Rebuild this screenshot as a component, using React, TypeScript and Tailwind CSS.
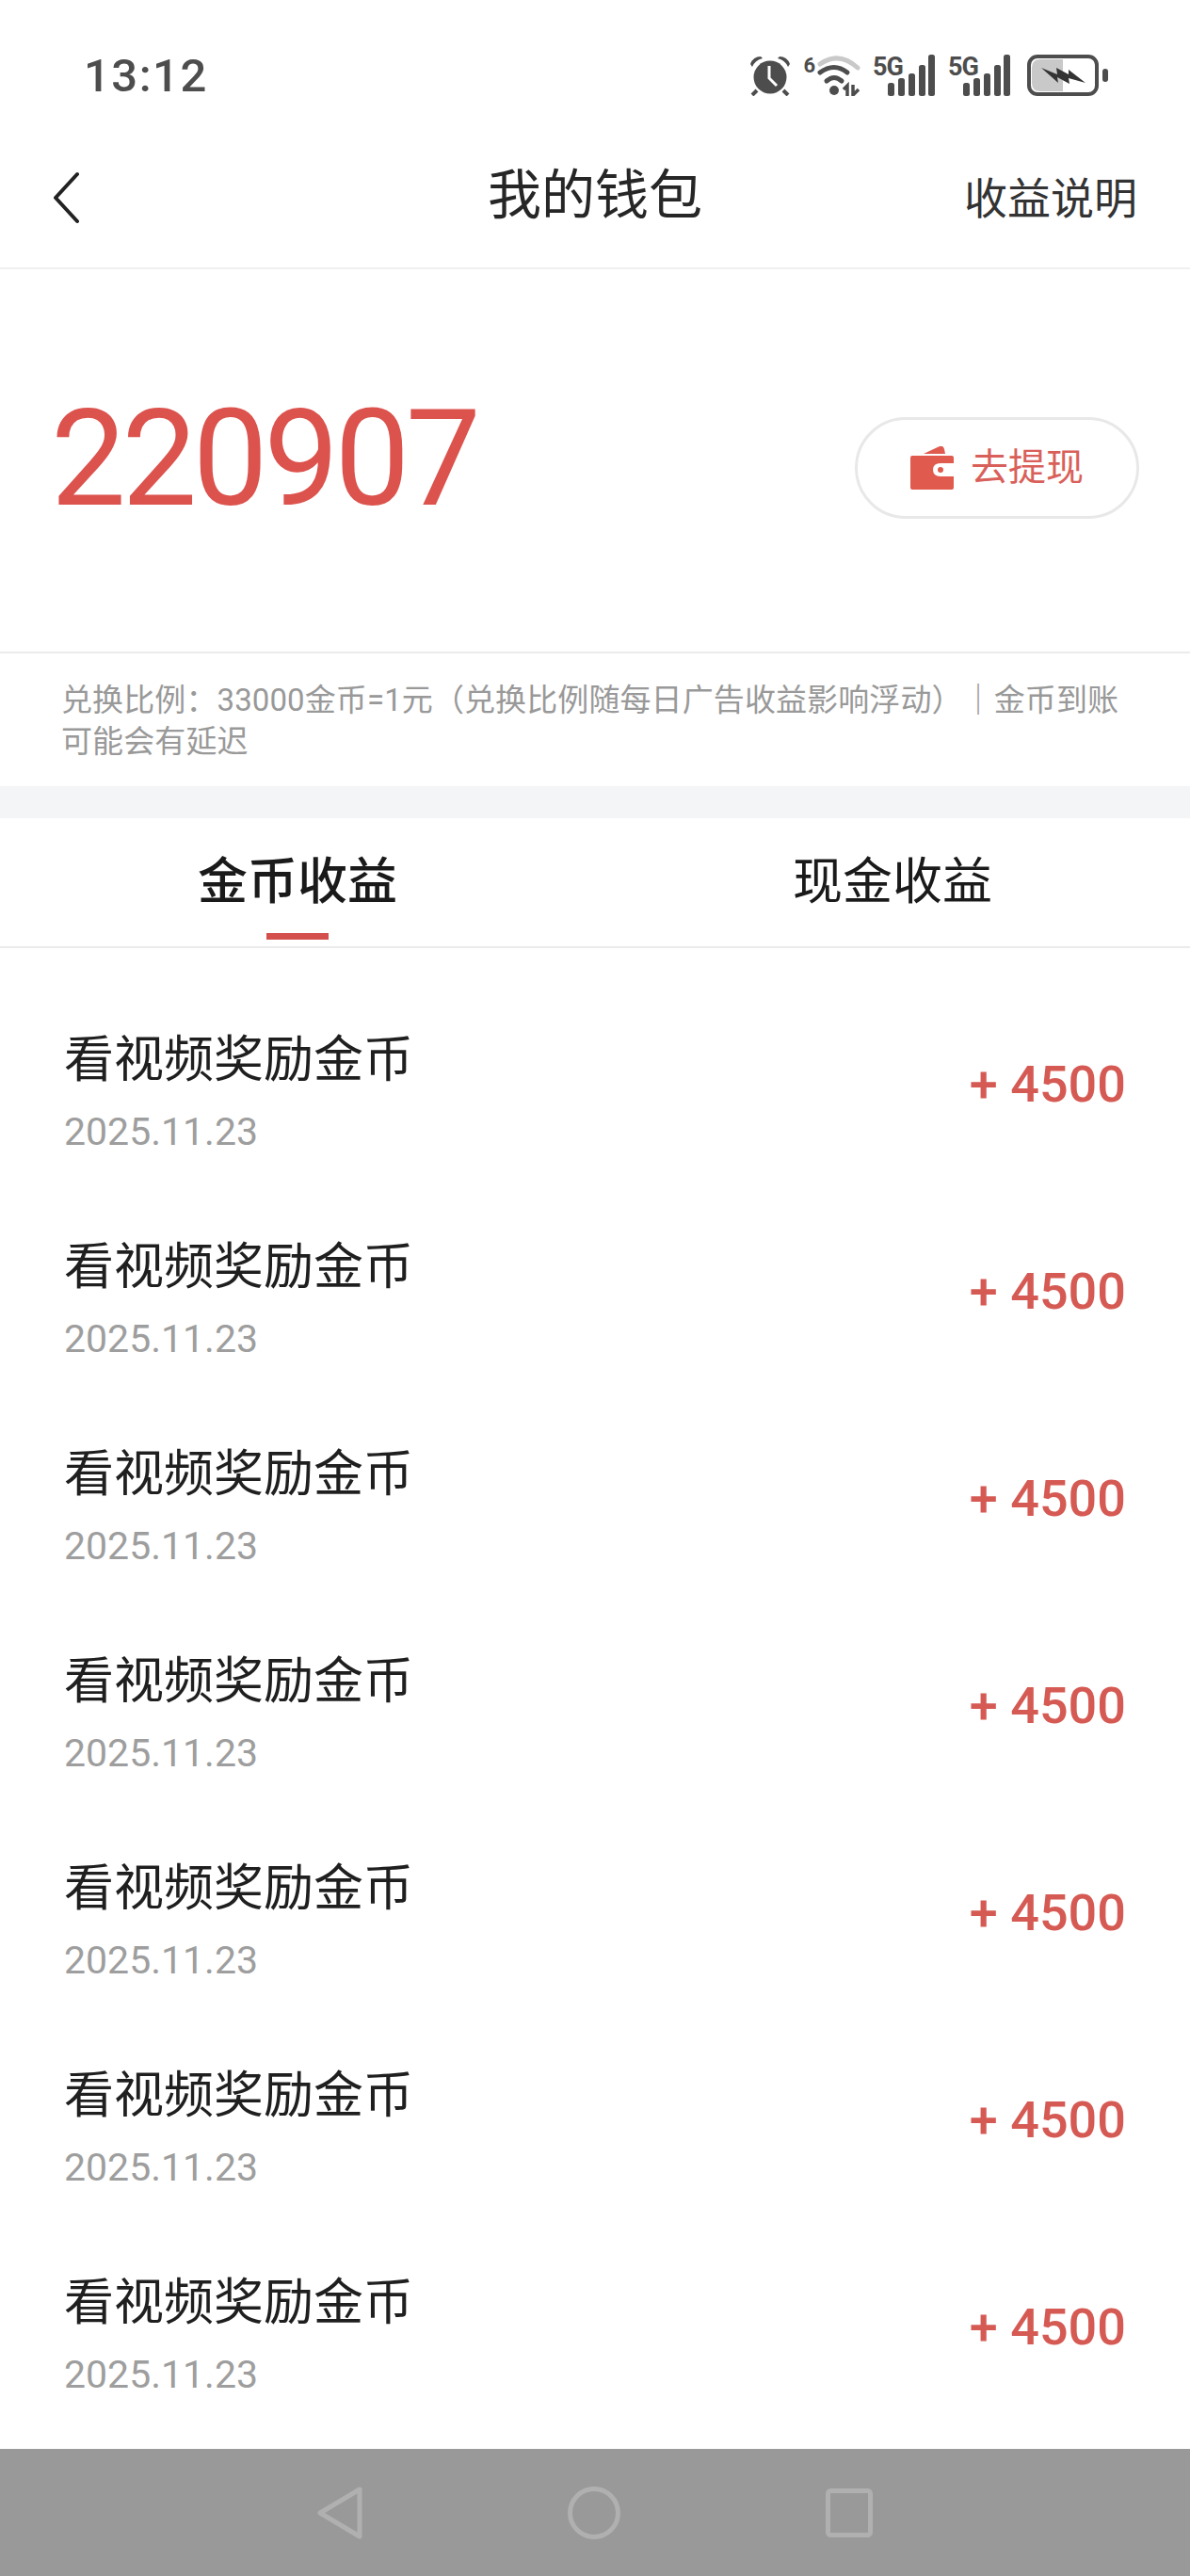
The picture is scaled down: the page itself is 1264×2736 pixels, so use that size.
const sans = "font-['Roboto','Noto_Sans_CJK_SC',sans-serif]";

function SignalBars() {
  return (
    <svg width="50" height="44" viewBox="0 0 50 44" fill="#4d4d4d" className="-ml-[14px]">
      <rect x="0" y="30" width="7" height="14" rx="2.5" />
      <rect x="11" y="25" width="7" height="19" rx="2.5" />
      <rect x="22" y="20" width="7" height="24" rx="2.5" />
      <rect x="33" y="11" width="7" height="33" rx="2.5" />
      <rect x="43" y="0" width="7" height="44" rx="2.5" />
    </svg>
  );
}

function FiveG() {
  return (
    <div className="flex items-end">
      <span className="font-['Roboto',sans-serif] text-[27px] leading-[27px] font-bold text-[#4d4d4d] self-start -tracking-[1px] w-[30px]">
        5G
      </span>
      <SignalBars />
    </div>
  );
}

function StatusBar() {
  return (
    <div className="flex items-center justify-between h-[162px] pl-[89px] pr-[87px] pb-[2px] -mb-[3px]">
      <span className="font-['Roboto',sans-serif] text-[49px] font-medium tracking-[1.5px] text-[#4d4d4d] leading-none">
        13:12
      </span>
      <div className="flex items-center gap-[14px]">
        <svg width="44" height="44" viewBox="0 0 44 44" fill="#4d4d4d">
          <circle cx="22" cy="24" r="17.5" />
          <path d="M1 10 Q4 2 12 2 L14 4 Q6 6 3 13 Z" />
          <path d="M43 10 Q40 2 32 2 L30 4 Q38 6 41 13 Z" />
          <path d="M8 38 L3 43 M36 38 L41 43" stroke="#4d4d4d" strokeWidth="4" />
          <path d="M21 12 V25 L29 33" stroke="#fff" strokeWidth="3" fill="none" />
        </svg>
        <div className="flex items-start gap-[1px] -ml-[1px] mr-[-4px]">
          <span className="font-['Roboto',sans-serif] text-[22px] leading-[24px] font-bold text-[#4d4d4d]">6</span>
          <svg width="50" height="44" viewBox="0 0 50 44" fill="none">
            <path d="M4 10 Q24 -4 44 14" stroke="#c9c9c9" strokeWidth="5" strokeLinecap="round" />
            <path d="M4 19 Q19 8 33 19" stroke="#4d4d4d" strokeWidth="5" strokeLinecap="round" />
            <path d="M11 28 Q19 21 27 28" stroke="#4d4d4d" strokeWidth="5" strokeLinecap="round" />
            <circle cx="19" cy="38" r="5" fill="#4d4d4d" />
            <path d="M33 44 V33 L29 37 M39 32 V43 L45 37" stroke="#4d4d4d" strokeWidth="3.5" />
          </svg>
        </div>
        <FiveG />
        <FiveG />
        <div className="flex items-center gap-[4px] ml-[4px]">
          <svg width="76" height="44" viewBox="0 0 76 44">
            <rect x="2" y="2" width="72" height="40" rx="9" fill="#fff" stroke="#4d4d4d" strokeWidth="4" />
            <path d="M5 14 Q5 5 14 5 H38 V39 H14 Q5 39 5 30 Z" fill="#c9c9c9" />
            <path d="M15 14 L32 21 L31 14 L44 21 L44 16 L62 30 L44 25 L45 31 L32 24 L33 30 Z" fill="#333" />
          </svg>
          <div className="w-[6px] h-[14px] rounded-[3px] bg-[#4d4d4d]" />
        </div>
      </div>
    </div>
  );
}

function Header() {
  return (
    <div className="relative flex items-center justify-center h-[127px] border-b-2 border-[#f0f0f0]">
      <svg width="28" height="56" viewBox="0 0 28 56" fill="none" className="absolute left-[56px] top-[23px]">
        <path d="M26 3 L3 28 L26 53" stroke="#222" strokeWidth="4" strokeLinecap="round" strokeLinejoin="round" />
      </svg>
      <h1 className="text-[57px] leading-none text-[#262626] font-normal -mt-[28px]">我的钱包</h1>
      <span className="absolute right-[56px] top-[20px] text-[46px] leading-[64px] text-[#333]">收益说明</span>
    </div>
  );
}

function Balance() {
  return (
    <div className="flex items-center justify-between h-[408px] pl-[54px] pr-[54px] border-b-2 border-[#ebebeb]">
      <span className="font-['Roboto',sans-serif] text-[142px] leading-none font-normal text-[#dc524d] -tracking-[4.4px] -mt-[2px]">
        220907
      </span>
      <button className="flex items-center justify-center gap-[18px] w-[302px] h-[108px] rounded-full border-[3px] border-[#e8e8e8] mt-[15px]">
        <svg width="46" height="46" viewBox="0 0 46 46" fill="#e05a4e">
          <path d="M14 8 L31 0 Q35 -1 36 3 L37 8 Z" />
          <path d="M2 10 H44 Q46 10 46 12 V18 H32 Q24 18 24 25 Q24 32 32 32 H46 V44 Q46 46 44 46 H2 Q0 46 0 44 V12 Q0 10 2 10 Z" />
          <circle cx="32" cy="25" r="3" />
        </svg>
        <span className="text-[40px] leading-none text-[#d9605a]">去提现</span>
      </button>
    </div>
  );
}

function Notice() {
  return (
    <div className="px-[65px] pt-[28px] h-[141px] text-[33px] leading-[44px] text-[#999] tracking-[0.1px]">
      兑换比例：33000金币=1元（兑换比例随每日广告收益影响浮动）｜金币到账可能会有延迟
    </div>
  );
}

function Tabs() {
  return (
    <div className="flex h-[138px] border-b-2 border-[#ebebeb]">
      <div className="relative flex-1 flex justify-center pt-[36px]">
        <span className="text-[53px] leading-[64px] font-medium text-[#1a1a1a]">金币收益</span>
        <div className="absolute bottom-[7px] w-[66px] h-[7px] bg-[#d4504c]" />
      </div>
      <div className="flex-1 flex justify-center pt-[36px]">
        <span className="text-[53px] leading-[64px] text-[#1a1a1a]">现金收益</span>
      </div>
    </div>
  );
}

function Row() {
  return (
    <div className="flex items-center justify-between h-[220px] pl-[68px] pr-[68px]">
      <div className="flex flex-col pt-[4px]">
        <span className="text-[53px] leading-[76px] text-[#1f1f1f]">看视频奖励金币</span>
        <span className="font-['Roboto',sans-serif] text-[41px] leading-[56px] mt-[10px] text-[#9e9e9e]">2025.11.23</span>
      </div>
      <span className="font-['Roboto',sans-serif] text-[54px] leading-none font-medium text-[#d65a54] -mt-[10px]">
        + 4500
      </span>
    </div>
  );
}

function NavBar() {
  return (
    <div className="flex items-center justify-center gap-[218px] h-[135px] bg-[#999] shrink-0">
      <svg width="48" height="56" viewBox="0 0 48 56" fill="none">
        <path d="M45 3 L3 28 L45 53 Z" stroke="#b0b0b0" strokeWidth="5" strokeLinejoin="round" />
      </svg>
      <svg width="56" height="56" viewBox="0 0 56 56" fill="none">
        <circle cx="28" cy="28" r="25.5" stroke="#b0b0b0" strokeWidth="5" />
      </svg>
      <svg width="50" height="52" viewBox="0 0 50 52" fill="none">
        <rect x="2.5" y="2.5" width="45" height="47" rx="3" stroke="#b0b0b0" strokeWidth="5" />
      </svg>
    </div>
  );
}

export default function App() {
  const rows = [1, 2, 3, 4, 5, 6, 7];

  return (
    <div className={`${sans} flex flex-col w-[1264px] h-[2736px] bg-white overflow-hidden`}>
      <StatusBar />
      <Header />
      <Balance />
      <Notice />
      <div className="h-[34px] bg-[#f4f5f7]" />
      <Tabs />
      <div className="flex-1 pt-[40px] overflow-hidden">
        {rows.map((r) => (
          <Row key={r} />
        ))}
      </div>
      <NavBar />
    </div>
  );
}
